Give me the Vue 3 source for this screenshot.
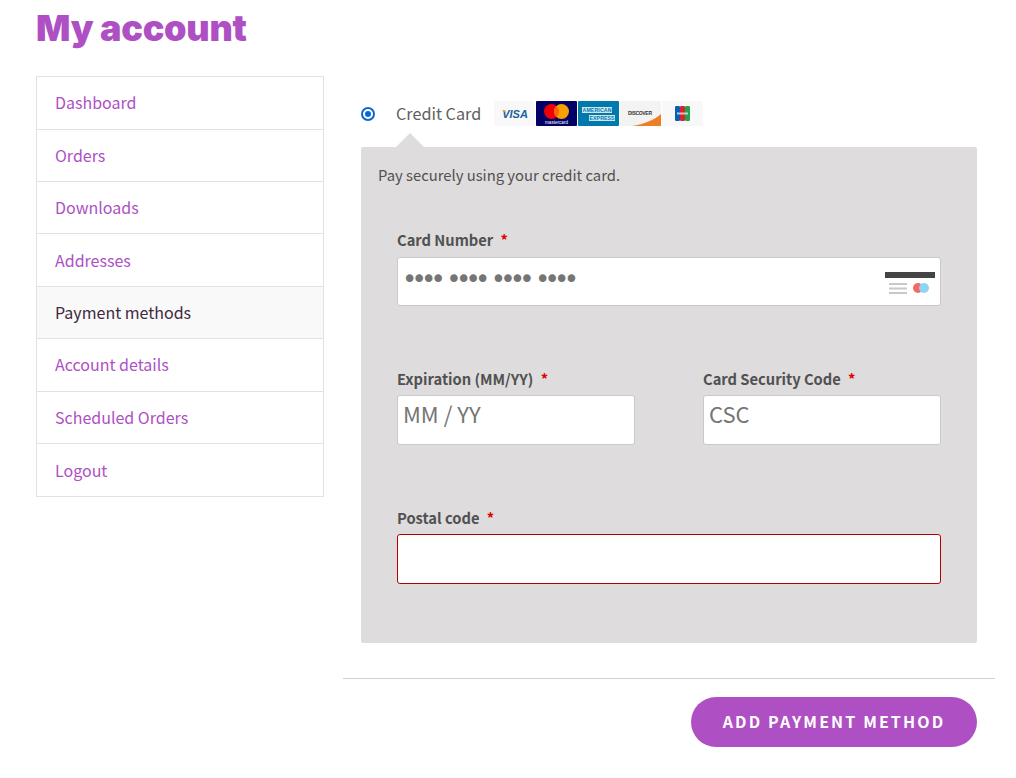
<script setup>
const links = [
  { label: 'Dashboard' },
  { label: 'Orders' },
  { label: 'Downloads' },
  { label: 'Addresses' },
  { label: 'Payment methods', active: true },
  { label: 'Account details' },
  { label: 'Scheduled Orders' },
  { label: 'Logout' }
]
const groups = [0, 1, 2, 3]
</script>

<template>
  <div class="page">
    <h1 class="title">My account</h1>
    <div class="columns">
      <nav class="nav">
        <a v-for="l in links" :key="l.label" class="nav-item" :class="{ active: l.active }">{{ l.label }}</a>
      </nav>
      <main class="main">
        <div class="method">
          <span class="radio"><span class="radio-dot"></span></span>
          <span class="method-label">Credit Card</span>
          <div class="logos">
            <svg class="logo" width="41" height="25" viewBox="0 0 41 25">
              <rect width="41" height="25" fill="#f8f8f8"/>
              <text x="21" y="17" text-anchor="middle" font-family="Liberation Sans, sans-serif" font-size="11" font-weight="700" font-style="italic" fill="#1a5f9e">VISA</text>
              <path d="M8 9l3 0 1 3z" fill="#e8a33d"/>
            </svg>
            <svg class="logo" width="41" height="25" viewBox="0 0 41 25">
              <rect width="41" height="25" rx="1" fill="#000066"/>
              <circle cx="15.5" cy="10.5" r="7.5" fill="#ee0005"/>
              <circle cx="25.5" cy="10.5" r="7.5" fill="#f9a000"/>
              <path d="M20.5 4.9a7.5 7.5 0 0 1 0 11.2a7.5 7.5 0 0 1 0-11.2z" fill="#ff6300"/>
              <text x="20.5" y="23" text-anchor="middle" font-family="Liberation Sans, sans-serif" font-size="4.6" fill="#fff">mastercard</text>
            </svg>
            <svg class="logo" width="41" height="25" viewBox="0 0 41 25">
              <rect width="41" height="25" rx="1" fill="#0079ad"/>
              <rect x="4" y="6" width="30" height="6" fill="#cfe6f0"/>
              <rect x="11" y="14" width="26" height="6" fill="#cfe6f0"/>
              <text x="19" y="11" text-anchor="middle" font-family="Liberation Sans, sans-serif" font-size="5.2" font-weight="700" fill="#0079ad" textLength="29">AMERICAN</text>
              <text x="24" y="19" text-anchor="middle" font-family="Liberation Sans, sans-serif" font-size="5.2" font-weight="700" fill="#0079ad" textLength="25">EXPRESS</text>
            </svg>
            <svg class="logo" width="41" height="25" viewBox="0 0 41 25">
              <rect width="41" height="25" fill="#f3f3f3"/>
              <path d="M12 25C24 23 34 19 41 13V25z" fill="#ee7f22"/>
              <text x="20" y="14" text-anchor="middle" font-family="Liberation Sans, sans-serif" font-size="5" font-weight="700" fill="#333" textLength="24">DISCOVER</text>
            </svg>
            <svg class="logo" width="41" height="25" viewBox="0 0 41 25">
              <rect width="41" height="25" fill="#f8f8f8"/>
              <rect x="13" y="5" width="5" height="15" rx="1.2" fill="#0b5fae"/>
              <rect x="18" y="5" width="5" height="15" rx="1.2" fill="#d5232f"/>
              <rect x="23" y="5" width="5" height="15" rx="1.2" fill="#22a34a"/>
              <rect x="15" y="11.5" width="11" height="2" fill="#e9eef0" opacity="0.75"/>
            </svg>
          </div>
        </div>

        <div class="box">
          <span class="arrow"></span>
          <p class="lead">Pay securely using your credit card.</p>

          <div class="field first">
            <label class="label">Card Number <span class="req">*</span></label>
            <div class="input number">
              <span v-for="g in groups" :key="g" class="dots">••••</span>
              <svg class="card-icon" width="50" height="26" viewBox="0 0 50 26">
                <rect x="0" y="3" width="50" height="6" fill="#444"/>
                <rect x="4" y="14" width="18" height="2" fill="#c8c8c8"/>
                <rect x="4" y="18.5" width="18" height="2" fill="#c8c8c8"/>
                <rect x="4" y="23" width="18" height="2" fill="#c8c8c8"/>
                <circle cx="33" cy="19" r="5" fill="#f26a63"/>
                <circle cx="39" cy="19" r="5" fill="#8bd6f5"/>
              </svg>
            </div>
          </div>

          <div class="row">
            <div class="field">
              <label class="label">Expiration (MM/YY) <span class="req">*</span></label>
              <div class="input tall"><span class="placeholder">MM / YY</span></div>
            </div>
            <div class="field">
              <label class="label">Card Security Code <span class="req">*</span></label>
              <div class="input tall"><span class="placeholder">CSC</span></div>
            </div>
          </div>

          <div class="field postal">
            <label class="label">Postal code <span class="req">*</span></label>
            <div class="input tall error"></div>
          </div>
        </div>

        <div class="actions">
          <button class="submit" type="button">ADD PAYMENT METHOD</button>
        </div>
      </main>
    </div>
  </div>
</template>

<style scoped>
.page {
  width: 1016px;
  height: 778px;
  overflow: hidden;
  box-sizing: border-box;
  padding-left: 36px;
  background: #fff;
  font-family: "Noto Sans CJK JP", "Noto Sans", sans-serif;
  color: #515151;
}
.title {
  margin: 0;
  height: 76px;
  padding-top: 6px;
  box-sizing: border-box;
  font-family: "Inter", sans-serif;
  font-weight: 900;
  font-size: 36px;
  line-height: 44px;
  letter-spacing: -0.3px;
  color: #ae50c4;
}
.columns {
  display: flex;
  gap: 19px;
  align-items: flex-start;
}
.nav {
  width: 288px;
  box-sizing: border-box;
  border: 1px solid #e2e2e2;
  display: flex;
  flex-direction: column;
}
.nav-item {
  height: 52.39px;
  flex: none;
  box-sizing: border-box;
  padding: 0 0 1px 18px;
  display: flex;
  align-items: center;
  font-size: 16px;
  color: #ae50c4;
  border-bottom: 1px solid #e2e2e2;
}
.nav-item:first-child {
  height: 52.69px;
}
.nav-item:last-child {
  border-bottom: 0;
}
.nav-item.active {
  color: #3e2a3e;
  background: #f9f9f9;
}
.main {
  width: 652px;
  display: flex;
  flex-direction: column;
}
.method {
  display: flex;
  align-items: center;
  height: 71px;
  padding-left: 18px;
  box-sizing: border-box;
  padding-top: 4px;
}
.radio {
  width: 14px;
  height: 14px;
  box-sizing: border-box;
  border: 2px solid #0b66d6;
  border-radius: 50%;
  display: flex;
  align-items: center;
  justify-content: center;
}
.radio-dot {
  width: 6px;
  height: 6px;
  border-radius: 50%;
  background: #0b66d6;
}
.method-label {
  margin-left: 21px;
  margin-bottom: 2px;
  font-size: 16.2px;
  color: #606060;
}
.logos {
  margin-left: 13px;
  display: flex;
  gap: 1px;
}
.logo {
  display: block;
}
.box {
  position: relative;
  margin: 0 18px;
  height: 496px;
  box-sizing: border-box;
  background: #dedcdd;
  border-radius: 2px;
  padding: 17px 36px 0;
}
.arrow {
  position: absolute;
  left: 35px;
  top: -14px;
  width: 0;
  height: 0;
  border-left: 14px solid transparent;
  border-right: 14px solid transparent;
  border-bottom: 14px solid #dedcdd;
}
.lead {
  margin: 0 0 0 -19px;
  font-size: 14.8px;
  line-height: 22px;
  color: #515151;
}
.field {
  display: flex;
  flex-direction: column;
  flex: 1;
}
.field.first {
  margin-top: 44px;
}
.row {
  display: flex;
  gap: 68px;
  margin-top: 63px;
}
.field.postal {
  margin-top: 63px;
}
.label {
  font-size: 14.7px;
  font-weight: 700;
  line-height: 20px;
  height: 26px;
  color: #515151;
}
.field.first .label {
  height: 27px;
}
.req {
  color: #e00000;
  margin-left: 4px;
}
.input {
  background: #fff;
  border: 1px solid #c9c9c9;
  border-radius: 3px;
  box-sizing: border-box;
  position: relative;
}
.number {
  height: 49px;
  display: flex;
  align-items: flex-start;
  gap: 6.2px;
  padding: 7px 4px;
}
.tall {
  height: 50px;
  padding: 3px 5px;
}
.dots {
  font-family: "DejaVu Sans", sans-serif;
  font-size: 26px;
  letter-spacing: -5.8px;
  line-height: 28px;
  color: #757575;
}
.card-icon {
  position: absolute;
  right: 5px;
  top: 11px;
}
.placeholder {
  font-size: 22px;
  line-height: 28px;
  color: #757575;
  display: block;
}
.error {
  border-color: #b20000;
}
.actions {
  margin-top: 35px;
  border-top: 1px solid #d0d0d0;
  padding: 18px 18px 0 0;
  display: flex;
  justify-content: flex-end;
}
.submit {
  width: 286px;
  height: 50px;
  border: 0;
  border-radius: 25px;
  background: #ae50c4;
  color: #fff;
  font-family: inherit;
  font-size: 16px;
  font-weight: 700;
  letter-spacing: 2.13px;
  padding: 0 0 2px;
}
</style>
